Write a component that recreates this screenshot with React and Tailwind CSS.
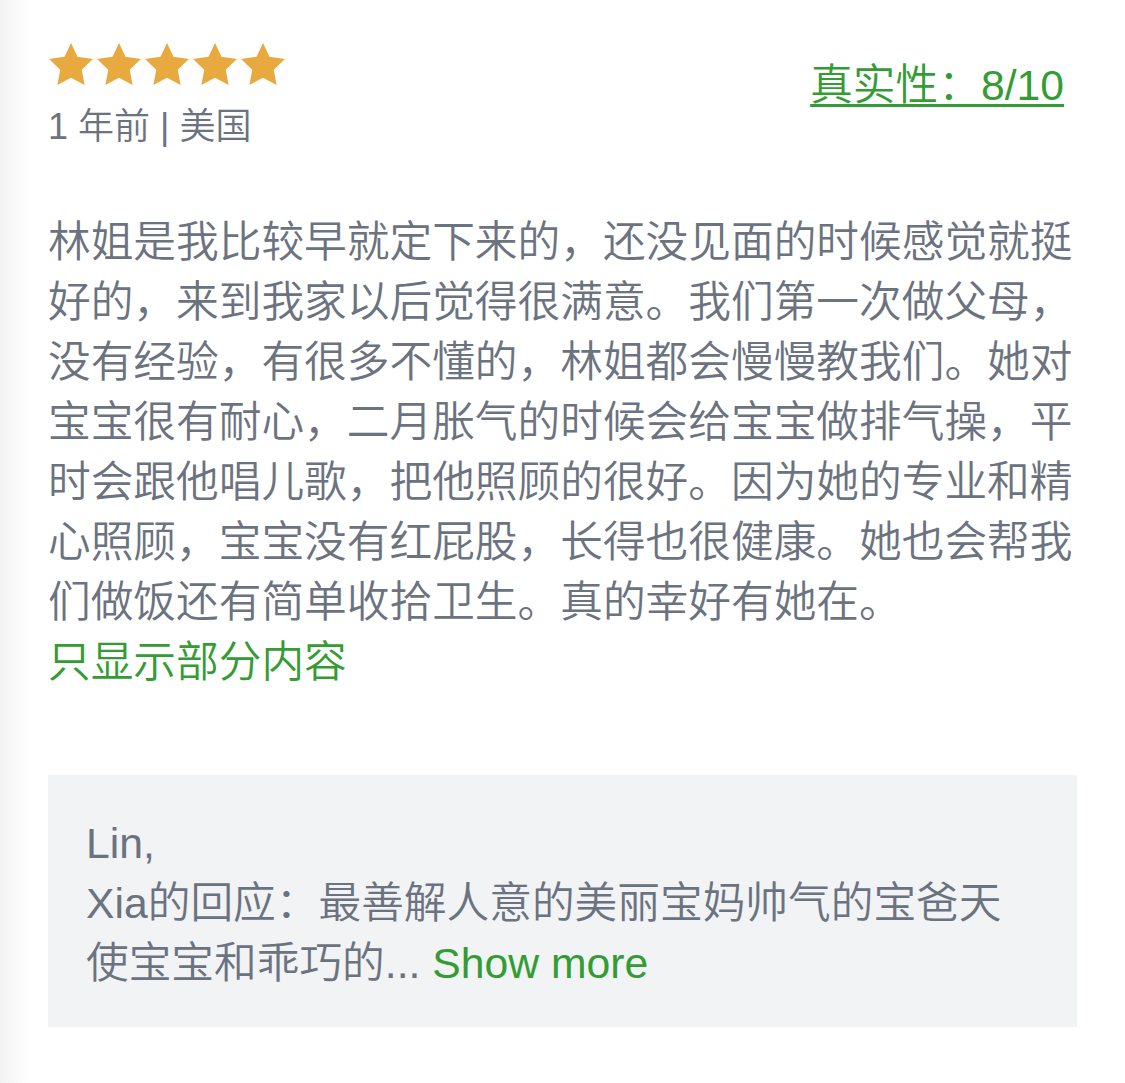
import React from "react";

const FONT = { fontFamily: '"Liberation Sans", "Noto Sans CJK SC", sans-serif' };

const Star = () => (
  <svg width="44" height="42" viewBox="2 2 20 19.1" className="block">
    <path
      d="M12 2l2.94 6.26L22 9.27l-5.1 4.87 1.28 6.96L12 17.77l-6.18 3.33 1.28-6.96L2 9.27l7.06-1.01L12 2z"
      fill="#e8a93f"
    />
  </svg>
);

const ReviewCard = () => {
  return (
    <div className="px-[48px] pb-[56px] font-[350]">
      <div className="flex justify-between items-start pt-[43px]">
        <div className="flex flex-col">
          <div className="flex gap-[4px] pl-[1px]">
            <Star />
            <Star />
            <Star />
            <Star />
            <Star />
          </div>
          <p className="mt-[18px] text-[36px] leading-[48px] text-[#6b7280]">
            1 年前 | 美国
          </p>
        </div>
        <a
          href="#"
          className="mt-[12px] mr-[13px] text-[42.7px] leading-[60px] text-[#349c34] underline decoration-[3px] underline-offset-[4px]"
        >
          真实性：8/10
        </a>
      </div>

      <p className="mt-[61px] text-[42.7px] leading-[60px] text-[#6b7280]">
        林姐是我比较早就定下来的，还没见面的时候感觉就挺好的，来到我家以后觉得很满意。我们第一次做父母，没有经验，有很多不懂的，林姐都会慢慢教我们。她对宝宝很有耐心，二月胀气的时候会给宝宝做排气操，平时会跟他唱儿歌，把他照顾的很好。因为她的专业和精心照顾，宝宝没有红屁股，长得也很健康。她也会帮我们做饭还有简单收拾卫生。真的幸好有她在。
      </p>
      <button className="block text-[42.7px] leading-[60px] text-[#349c34]">
        只显示部分内容
      </button>

      <div className="mt-[83px] bg-[#f2f3f5] pl-[38px] pr-[36px] pt-[38px] pb-[34px] text-[42.7px] leading-[60px] text-[#6b7280]">
        <p>Lin,</p>
        <p>Xia的回应：最善解人意的美丽宝妈帅气的宝爸天</p>
        <p>
          使宝宝和乖巧的... <span className="text-[#349c34]">Show more</span>
        </p>
      </div>
    </div>
  );
};

export default function App() {
  return (
    <div
      className="min-h-screen w-full bg-[linear-gradient(to_right,#f3f3f3,#ffffff_32px)]"
      style={FONT}
    >
      <ReviewCard />
    </div>
  );
}
